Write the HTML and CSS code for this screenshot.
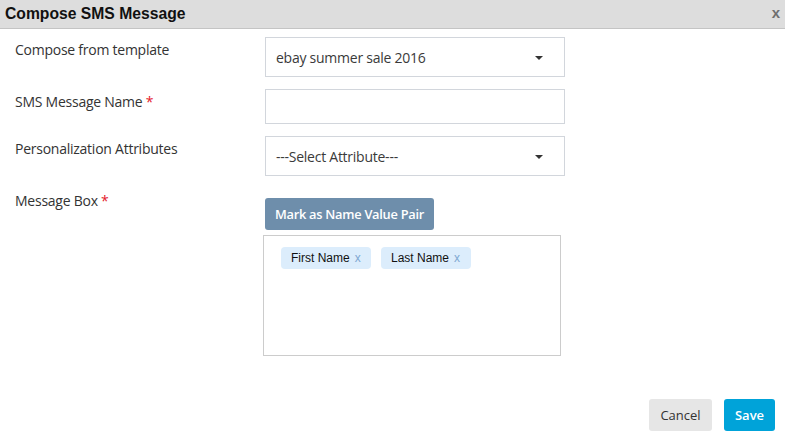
FILE: index.html
```html
<!DOCTYPE html>
<html>
<head>
<meta charset="utf-8">
<link rel="stylesheet" href="styles.css">
</head>
<body>
<div class="dialog">
  <div class="header">
    <span class="title">Compose SMS Message</span>
    <span class="close">x</span>
  </div>
  <div class="form">
    <div class="label">Compose from template</div>
    <div class="control">
      <div class="select"><span>ebay summer sale 2016</span><span class="caret"></span></div>
    </div>

    <div class="label">SMS Message Name <span class="req">*</span></div>
    <div class="control">
      <div class="input"></div>
    </div>

    <div class="label">Personalization Attributes</div>
    <div class="control">
      <div class="select"><span>---Select Attribute---</span><span class="caret"></span></div>
    </div>

    <div class="label">Message Box <span class="req">*</span></div>
    <div class="control msg">
      <button class="mark">Mark as Name Value Pair</button>
      <div class="textarea">
        <span class="chip">First Name <span class="x">x</span></span>
        <span class="chip">Last Name <span class="x">x</span></span>
      </div>
    </div>
  </div>
  <div class="footer">
    <button class="btn cancel">Cancel</button>
    <button class="btn save">Save</button>
  </div>
</div>
</body>
</html>
```
FILE: styles.css
```css
* { box-sizing: border-box; }
html, body { margin: 0; padding: 0; background: #fff; }
body { font-family: "Open Sans", "Noto Sans", sans-serif; color: #333; }
.dialog { width: 785px; height: 447px; display: flex; flex-direction: column; }
.header {
  height: 29px;
  background: #dddddd;
  border-bottom: 1px solid #c4c4c4;
  display: flex;
  align-items: center;
  justify-content: space-between;
  padding: 0 5px 1px 5px;
}
.title { font-family: "Liberation Sans", Arial, sans-serif; font-weight: bold; font-size: 15.7px; color: #111; }
.close { font-family: "Liberation Sans", Arial, sans-serif; font-weight: bold; font-size: 15px; color: #6f6f6f; margin-top: -2px; }
.form {
  display: grid;
  grid-template-columns: 250px 300px;
  row-gap: 12px;
  padding: 8px 0 0 15px;
}
.label { font-size: 14px; line-height: 20px; padding-top: 3px; color: #333; letter-spacing: -0.25px; }
.req { color: #e4202a; }
.select, .input {
  width: 300px;
  border: 1px solid #d2d6dc;
  background: #fff;
}
.select {
  height: 40px;
  display: flex;
  align-items: center;
  justify-content: space-between;
  padding: 0 21px 0 10px;
  font-size: 14px;
  color: #3a3a3a;
  letter-spacing: -0.25px;
}
.caret {
  width: 0; height: 0;
  border-left: 4px solid transparent;
  border-right: 4px solid transparent;
  border-top: 4px solid #333;
  margin-top: 2px;
}
.input { height: 35px; }
.msg { display: flex; flex-direction: column; align-items: flex-start; }
.mark {
  margin-top: 10px;
  height: 32px;
  width: 169px;
  padding: 0;
  border: none;
  border-radius: 3px;
  background: #6e8eab;
  color: #fff;
  font-family: "Open Sans", "Noto Sans", sans-serif;
  font-weight: 600;
  font-size: 12.8px;
  letter-spacing: -0.25px;
}
.textarea {
  margin-top: 5px;
  margin-left: -2px;
  width: 298px;
  height: 121px;
  border: 1px solid #cccccc;
  padding: 11px 17px;
  display: flex;
  align-items: flex-start;
  gap: 10px;
}
.chip {
  height: 22px;
  width: 90px;
  display: inline-flex;
  align-items: center;
  padding-left: 10px;
  background: #dcedfc;
  border-radius: 4px;
  font-family: "Liberation Sans", Arial, sans-serif;
  font-size: 12px;
  color: #111;
}
.chip .x { color: #7fa8d2; margin-left: 5px; }
.footer {
  margin-top: auto;
  display: flex;
  justify-content: flex-end;
  gap: 12px;
  padding: 0 10px 16px 0;
}
.btn {
  height: 32px;
  border: none;
  border-radius: 3px;
  font-family: "Open Sans", "Noto Sans", sans-serif;
  font-size: 13px;
  padding: 0;
}
.cancel { width: 63px; background: #e6e6e6; color: #333; }
.save { width: 51px; background: #00a3d9; color: #fff; font-weight: 600; }
```
